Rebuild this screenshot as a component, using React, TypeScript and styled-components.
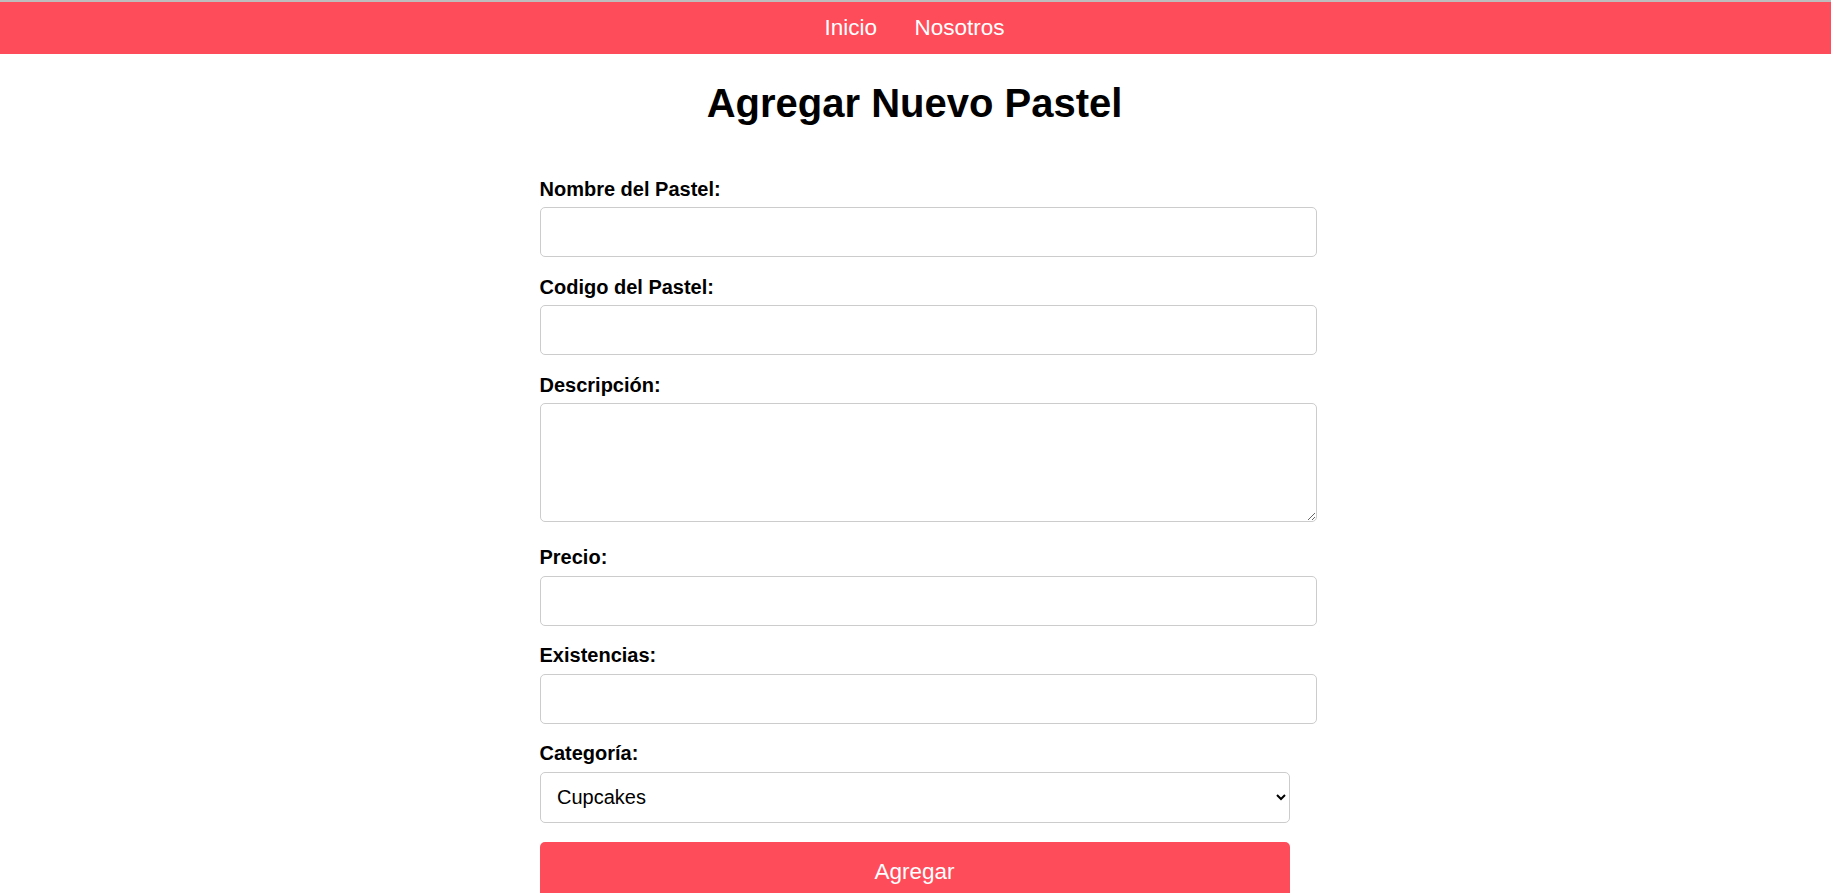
import React from "react";
import styled, { createGlobalStyle } from "styled-components";

const RED = "#ff4c5b";

const GlobalStyle = createGlobalStyle`
  html, body {
    margin: 0;
    padding: 0;
    background: #ffffff;
  }
  body {
    font-family: "Liberation Sans", Arial, sans-serif;
    color: #000;
  }
`;

const Page = styled.div`
  min-height: 100vh;
  margin-right: 1px;
  display: flex;
  flex-direction: column;
`;

const NavBar = styled.nav`
  border-top: 2px solid #bdbdbd;
  background: ${RED};
  height: 52px;
  padding-right: 2px;
  display: flex;
  justify-content: center;
  align-items: center;
`;

const NavLink = styled.a`
  color: #ffffff;
  font-size: 22.5px;
  text-decoration: none;
  margin: 0 18.75px;
`;

const Main = styled.main`
  padding-right: 2px;
`;

const Title = styled.h1`
  font-size: 40px;
  font-weight: bold;
  text-align: center;
  margin: 26.8px 0;
`;

const Form = styled.form`
  width: 750px;
  margin: 0 auto;
  padding-top: 25px;
`;

const Label = styled.label`
  display: block;
  font-size: 20px;
  font-weight: bold;
  line-height: normal;
  margin-bottom: 6.25px;
`;

const Field = styled.input`
  display: block;
  box-sizing: content-box;
  width: 100%;
  padding: 12.5px;
  border: 1px solid #cccccc;
  border-radius: 5px;
  font-family: "Liberation Sans", Arial, sans-serif;
  font-size: 20px;
  line-height: normal;
  height: 23px;
  margin: 0 0 18.75px 0;
  background: #fff;
  outline: none;
`;

const TextArea = styled.textarea`
  display: block;
  box-sizing: border-box;
  width: 777px;
  height: 119px;
  padding: 12.5px;
  border: 1px solid #cccccc;
  border-radius: 5px;
  font-family: "Liberation Sans", Arial, sans-serif;
  font-size: 20px;
  margin: 0 0 24.5px 0;
  resize: both;
  outline: none;
`;

const Select = styled.select`
  display: block;
  box-sizing: border-box;
  width: 100%;
  height: 51px;
  padding: 0 12.5px;
  border: 1px solid #cccccc;
  border-radius: 5px;
  font-family: "Liberation Sans", Arial, sans-serif;
  font-size: 20px;
  color: #000;
  background: #fff;
  margin: 0 0 19px 0;
  outline: none;
`;

const SubmitButton = styled.button`
  display: block;
  box-sizing: border-box;
  width: 100%;
  padding: 17px 0 16px;
  border: none;
  border-radius: 5px;
  background: ${RED};
  color: #ffffff;
  font-family: "Liberation Sans", Arial, sans-serif;
  font-size: 22.5px;
  line-height: normal;
  cursor: pointer;
`;

export default function App() {
  return (
    <Page>
      <GlobalStyle />
      <NavBar>
        <NavLink href="#">Inicio</NavLink>
        <NavLink href="#">Nosotros</NavLink>
      </NavBar>
      <Main>
        <Title>Agregar Nuevo Pastel</Title>
        <Form onSubmit={(e) => e.preventDefault()}>
          <Label htmlFor="nombre">Nombre del Pastel:</Label>
          <Field id="nombre" type="text" />
          <Label htmlFor="codigo">Codigo del Pastel:</Label>
          <Field id="codigo" type="text" />
          <Label htmlFor="descripcion">Descripción:</Label>
          <TextArea id="descripcion" />
          <Label htmlFor="precio">Precio:</Label>
          <Field id="precio" type="text" />
          <Label htmlFor="existencias">Existencias:</Label>
          <Field id="existencias" type="text" />
          <Label htmlFor="categoria">Categoría:</Label>
          <Select id="categoria" defaultValue="Cupcakes">
            <option value="Cupcakes">Cupcakes</option>
            <option value="Pasteles">Pasteles</option>
            <option value="Galletas">Galletas</option>
          </Select>
          <SubmitButton type="submit">Agregar</SubmitButton>
        </Form>
      </Main>
    </Page>
  );
}
